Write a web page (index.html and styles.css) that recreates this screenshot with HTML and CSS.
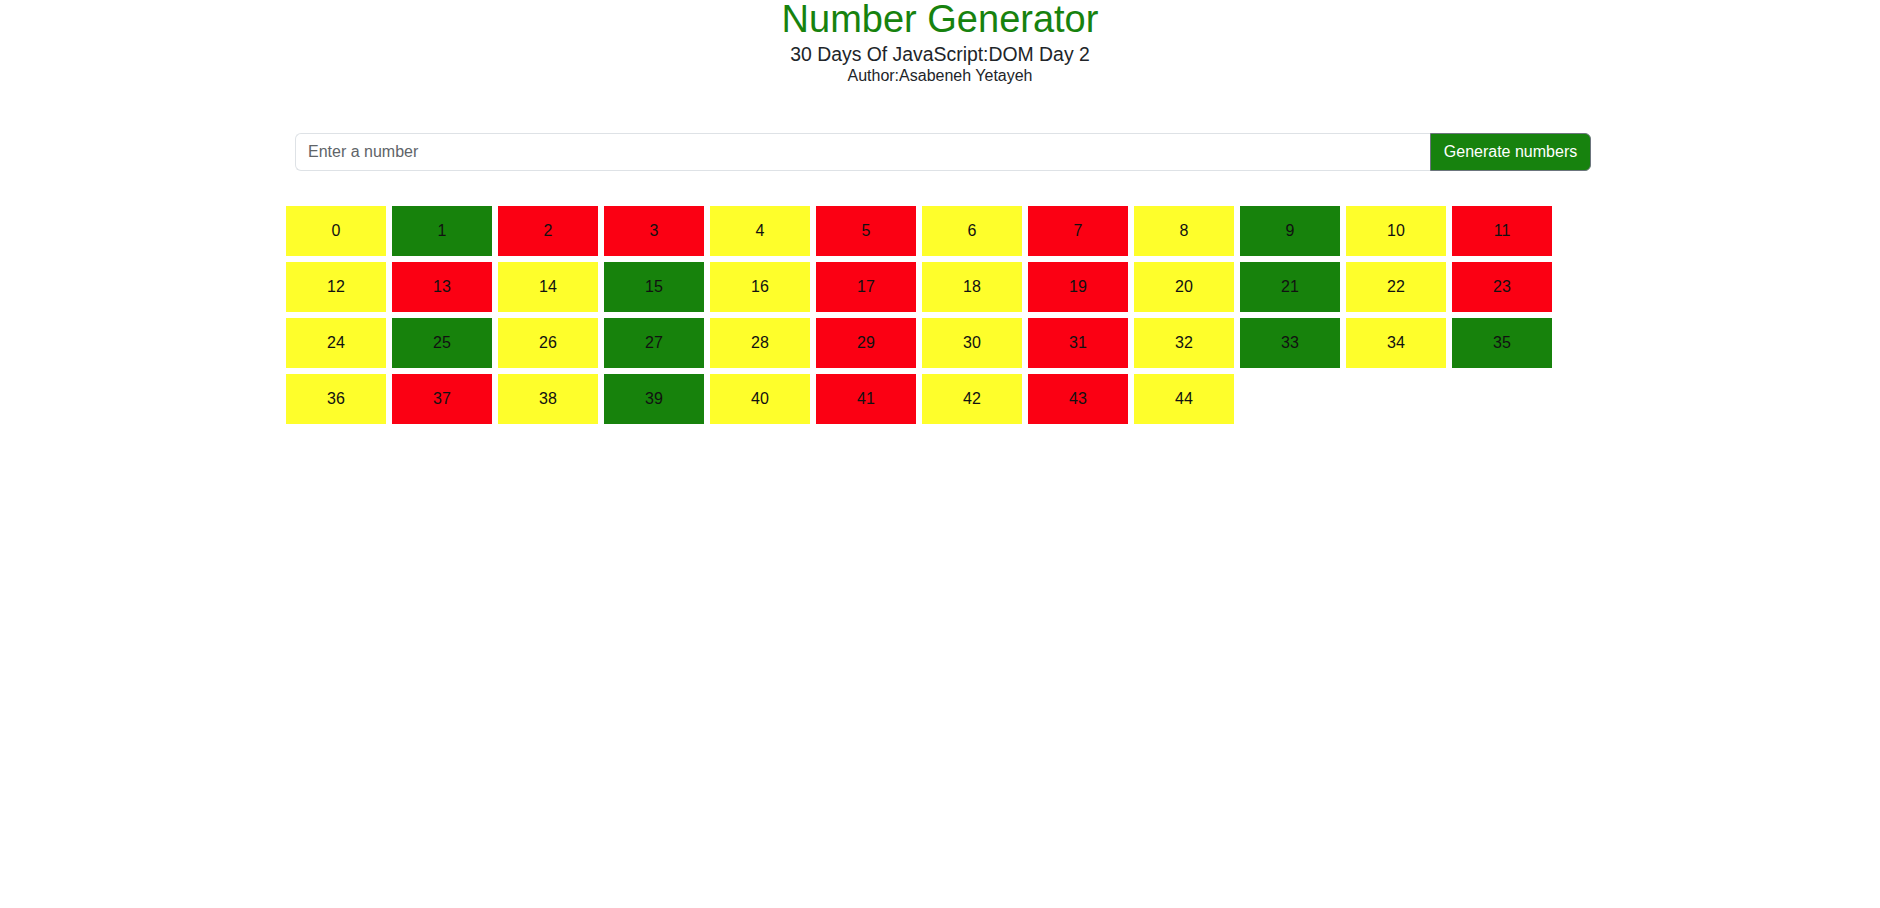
FILE: index.html
```html
<!DOCTYPE html>
<html lang="en">
<head>
<meta charset="utf-8">
<title>Number Generator</title>
<link rel="stylesheet" href="styles.css">
</head>
<body>
<div class="wrapper">
  <header class="header">
    <h1 class="title">Number Generator</h1>
    <h2 class="subtitle">30 Days Of JavaScript:DOM Day 2</h2>
    <p class="author">Author:Asabeneh Yetayeh</p>
  </header>
  <form class="form">
    <input class="input" type="text" placeholder="Enter a number">
    <button class="btn" type="button">Generate numbers</button>
  </form>
  <div class="grid">
    <div class="cell even">0</div>
    <div class="cell odd">1</div>
    <div class="cell prime">2</div>
    <div class="cell prime">3</div>
    <div class="cell even">4</div>
    <div class="cell prime">5</div>
    <div class="cell even">6</div>
    <div class="cell prime">7</div>
    <div class="cell even">8</div>
    <div class="cell odd">9</div>
    <div class="cell even">10</div>
    <div class="cell prime">11</div>
    <div class="cell even">12</div>
    <div class="cell prime">13</div>
    <div class="cell even">14</div>
    <div class="cell odd">15</div>
    <div class="cell even">16</div>
    <div class="cell prime">17</div>
    <div class="cell even">18</div>
    <div class="cell prime">19</div>
    <div class="cell even">20</div>
    <div class="cell odd">21</div>
    <div class="cell even">22</div>
    <div class="cell prime">23</div>
    <div class="cell even">24</div>
    <div class="cell odd">25</div>
    <div class="cell even">26</div>
    <div class="cell odd">27</div>
    <div class="cell even">28</div>
    <div class="cell prime">29</div>
    <div class="cell even">30</div>
    <div class="cell prime">31</div>
    <div class="cell even">32</div>
    <div class="cell odd">33</div>
    <div class="cell even">34</div>
    <div class="cell odd">35</div>
    <div class="cell even">36</div>
    <div class="cell prime">37</div>
    <div class="cell even">38</div>
    <div class="cell odd">39</div>
    <div class="cell even">40</div>
    <div class="cell prime">41</div>
    <div class="cell even">42</div>
    <div class="cell prime">43</div>
    <div class="cell even">44</div>
  </div>
</div>
</body>
</html>
```
FILE: styles.css
```css
html, body {
  margin: 0;
  padding: 0;
  background: #ffffff;
}

body {
  font-family: "Liberation Sans", Arial, sans-serif;
  color: #212529;
}

.wrapper {
  width: 1320px;
  margin: 0 auto;
}

.header {
  text-align: center;
}

.title {
  margin: 0;
  font-size: 38px;
  line-height: 38px;
  font-weight: 400;
  color: #17820e;
}

.subtitle {
  margin: 5px 0 0;
  font-size: 19.4px;
  line-height: 23px;
  font-weight: 400;
  color: #212529;
}

.author {
  margin: 0;
  font-size: 16px;
  line-height: 19px;
  color: #212529;
}

.form {
  display: flex;
  margin: 48px 9px 0 15px;
  height: 38px;
}

.input {
  flex: 1;
  min-width: 0;
  box-sizing: border-box;
  height: 38px;
  margin: 0;
  padding: 6px 12px;
  border: 1px solid #dee2e6;
  border-right: none;
  border-radius: 6px 0 0 6px;
  font-family: "Liberation Sans", Arial, sans-serif;
  font-size: 16px;
  color: #212529;
  outline: none;
}

.input::placeholder {
  color: #606468;
  opacity: 1;
}

.btn {
  box-sizing: border-box;
  height: 38px;
  width: 161px;
  margin: 0;
  padding: 6px 12px;
  border: 1px solid #6c757d;
  border-radius: 0 6px 6px 0;
  background: #17820e;
  color: #ffffff;
  font-family: "Liberation Sans", Arial, sans-serif;
  font-size: 16px;
  cursor: pointer;
}

.grid {
  display: flex;
  flex-wrap: wrap;
  gap: 6px;
  margin-top: 35px;
  padding-left: 6px;
}

.cell {
  width: 100px;
  height: 50px;
  display: flex;
  align-items: center;
  justify-content: center;
  font-size: 16px;
  color: #111111;
}

.even {
  background: #fefe2b;
}

.odd {
  background: #17820c;
}

.prime {
  background: #fb0013;
}
```
